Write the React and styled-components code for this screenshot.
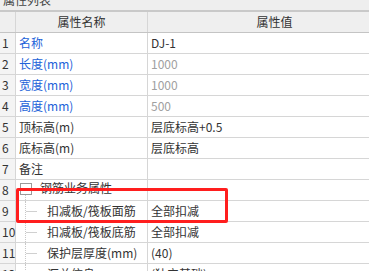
import React from "react";
import styled, { createGlobalStyle } from "styled-components";

const GlobalStyle = createGlobalStyle`
  html, body {
    margin: 0;
    padding: 0;
    background: #ffffff;
    overflow: hidden;
  }
  body {
    font-family: "Noto Sans CJK SC", "Noto Sans", sans-serif;
    font-size: 12px;
    color: #333333;
  }
`;

const Panel = styled.div`
  position: relative;
  width: 369px;
  height: 271px;
  overflow: hidden;
  background: #ffffff;
`;

const TitleBar = styled.div`
  height: 10px;
  overflow: hidden;
  background: #eeeeee;
  border-bottom: 2px solid #c9c9c9;
`;

const TitleText = styled.div`
  margin-top: -9px;
  padding-left: 3px;
  line-height: 18px;
  color: #444444;
`;

const Row = styled.div`
  display: grid;
  grid-template-columns: 15px 131px 253px;
  column-gap: 1px;
  width: 401px;
  height: ${p => (p.$header ? 20 : 20)}px;
  background: #d6d6d6;
  border-bottom: 1px solid ${p => (p.$header ? "#c4c4c4" : "#d6d6d6")};
`;

const NumCell = styled.div`
  display: flex;
  align-items: center;
  padding-left: 2px;
  background: ${p => (p.$header ? "#efefef" : "#f4f4f4")};
  color: #333333;
  line-height: 20px;
`;

const HeadCell = styled.div`
  display: flex;
  align-items: center;
  justify-content: center;
  background: #efefef;
  color: #333333;
  line-height: 20px;
`;

const Cell = styled.div`
  position: relative;
  display: flex;
  align-items: center;
  padding-left: ${p => p.$indent || 3}px;
  background: #ffffff;
  color: ${p => p.$color || "#333333"};
  line-height: 20px;
  white-space: nowrap;
  overflow: hidden;
`;

const ExpandBox = styled.span`
  width: 10px;
  height: 10px;
  margin-right: 8px;
  margin-top: -3px;
  border: 1px solid #9a9a9a;
  background: #ffffff;
  flex: none;
`;

const GroupText = styled.span`
  margin-top: -4px;
`;

const TreeGuide = styled.span`
  position: absolute;
  left: 9px;
  top: 0;
  width: 12px;
  height: ${p => (p.$last ? "10px" : "20px")};
  border-left: 1px dotted #c8c8c8;

  &::after {
    content: "";
    position: absolute;
    left: 0;
    top: 10px;
    width: 11px;
    border-top: 1px solid #d0d0d0;
  }
`;

const GroupGuide = styled.span`
  position: absolute;
  left: 9px;
  top: 15px;
  height: 5px;
  border-left: 1px dotted #c8c8c8;
`;

const Highlight = styled.div`
  position: absolute;
  left: 16px;
  top: 188px;
  width: 206px;
  height: 29px;
  border: 3px solid #ff1e1e;
  border-radius: 2px;
  pointer-events: none;
`;

const BLUE = "#2262d9";
const GRAY = "#a0a0a0";

const rows = [
  { n: 1, name: "名称", value: "DJ-1", nameColor: BLUE },
  { n: 2, name: "长度(mm)", value: "1000", nameColor: BLUE, valueColor: GRAY },
  { n: 3, name: "宽度(mm)", value: "1000", nameColor: BLUE, valueColor: GRAY },
  { n: 4, name: "高度(mm)", value: "500", nameColor: BLUE, valueColor: GRAY },
  { n: 5, name: "顶标高(m)", value: "层底标高+0.5" },
  { n: 6, name: "底标高(m)", value: "层底标高" },
  { n: 7, name: "备注", value: "" },
  { n: 8, name: "钢筋业务属性", value: "", group: true },
  { n: 9, name: "扣减板/筏板面筋", value: "全部扣减", child: true },
  { n: 10, name: "扣减板/筏板底筋", value: "全部扣减", child: true },
  { n: 11, name: "保护层厚度(mm)", value: "(40)", child: true },
  { n: 12, name: "汇总信息", value: "(独立基础)", child: true, last: true }
];

const App = () => {
  return (
    <Panel>
      <GlobalStyle />
      <TitleBar>
        <TitleText>属性列表</TitleText>
      </TitleBar>
      <Row $header>
        <NumCell $header />
        <HeadCell>属性名称</HeadCell>
        <HeadCell>属性值</HeadCell>
      </Row>
      {rows.map(r => (
        <Row key={r.n}>
          <NumCell>{r.n}</NumCell>
          {r.group ? (
            <Cell $indent={4}>
              <ExpandBox />
              <GroupText>{r.name}</GroupText>
              <GroupGuide />
            </Cell>
          ) : (
            <Cell $indent={r.child ? 31 : 3} $color={r.nameColor}>
              {r.child && <TreeGuide $last={r.last} />}
              {r.name}
            </Cell>
          )}
          <Cell $color={r.valueColor}>{r.value}</Cell>
        </Row>
      ))}
      <Highlight />
    </Panel>
  );
};

export default App;
